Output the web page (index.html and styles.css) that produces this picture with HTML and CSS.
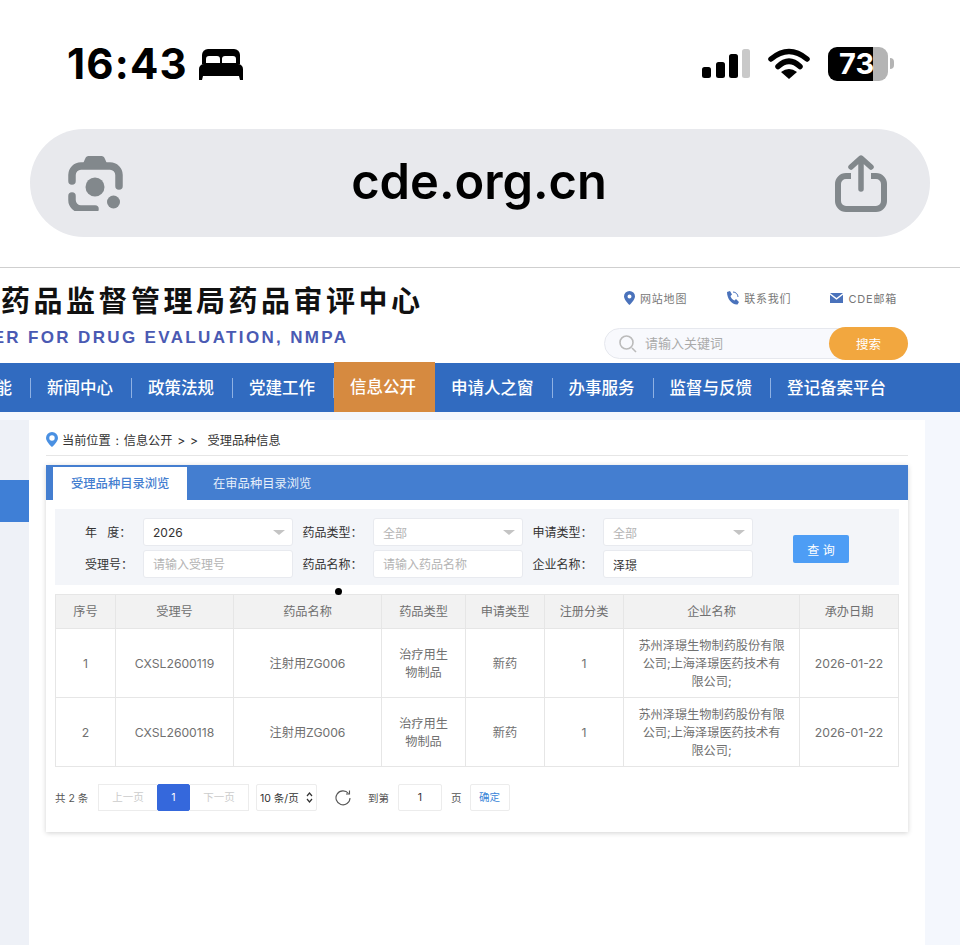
FILE: index.html
```html
<!DOCTYPE html>
<html lang="zh-CN">
<head>
  <meta charset="UTF-8">
  <title>cde.org.cn</title>
  <link rel="stylesheet" href="styles.css">
</head>
<body>
  <div class="status-bar">
    <div class="status-left">
      <span class="time">16:43</span>
      <svg class="bed" width="44" height="31" viewBox="0 0 44 31">
        <path d="M3 15V6a6 6 0 0 1 6-6h26a6 6 0 0 1 6 6v9z" fill="#000"/>
        <path d="M7 14V10a3 3 0 0 1 3-3h8a3 3 0 0 1 3 3v4zM23 14V10a3 3 0 0 1 3-3h8a3 3 0 0 1 3 3v4z" fill="#fff"/>
        <path d="M5 15h34a5 5 0 0 1 5 5v11h-3l-1-4H4l-1 4H0V20a5 5 0 0 1 5-5z" fill="#000"/>
      </svg>
    </div>
    <div class="status-right">
      <svg width="48" height="30" viewBox="0 0 48 30">
        <rect x="0" y="18" width="9" height="11" rx="2.5" fill="#000"/>
        <rect x="14" y="13" width="9" height="16" rx="2.5" fill="#000"/>
        <rect x="27" y="5" width="9" height="24" rx="2.5" fill="#000"/>
        <rect x="40" y="0" width="8" height="29" rx="2.5" fill="#c9c9c9"/>
      </svg>
      <svg class="wifi" width="42" height="31" viewBox="0 0 42 31">
        <path d="M3 11Q21 -4 39 11M10 18.500Q21 8 32 18.500" fill="none" stroke="#000" stroke-width="5.500" stroke-linecap="round"/>
        <path d="M13 24Q21 18 29 24L21 31z" fill="#000"/>
      </svg>
      <div class="battery"><span>73</span></div>
      <div class="battery-nub"></div>
    </div>
  </div>

  <div class="url-bar">
    <svg width="55" height="55" viewBox="0 0 55 55">
      <path d="M4 25v-6a9 9 0 0 1 9-9h29a9 9 0 0 1 9 9v11M4 40v4a9 9 0 0 0 9 9h14" fill="none" stroke="#82888c" stroke-width="7.500" stroke-linecap="round"/>
      <path d="M14 10l3-7a4 4 0 0 1 3-3h14a4 4 0 0 1 3 3l3 7z" fill="#82888c"/>
      <circle cx="27" cy="31" r="9.500" fill="#82888c"/>
      <circle cx="45.500" cy="46" r="6.500" fill="#82888c"/>
    </svg>
    <span class="url">cde.org.cn</span>
    <svg width="52" height="57" viewBox="0 0 52 57">
      <path d="M16 21H11a8 8 0 0 0-8 8v17a8 8 0 0 0 8 8h30a8 8 0 0 0 8-8V29a8 8 0 0 0-8-8h-5" fill="none" stroke="#82888c" stroke-width="6"/>
      <path d="M26 34V4M16 12l10-9 10 9" fill="none" stroke="#82888c" stroke-width="5.500" stroke-linecap="round" stroke-linejoin="round"/>
    </svg>
  </div>

  <div class="page">
    <header class="site-header">
      <div class="logo">
        <h1>国家药品监督管理局药品审评中心</h1>
        <p>CENTER FOR DRUG EVALUATION, NMPA</p>
      </div>
      <div class="header-right">
        <div class="top-links">
          <a>
            <svg width="11" height="14" viewBox="0 0 11 14"><path d="M5.500 0a5.500 5.500 0 0 1 5.500 5.500C11 9 5.500 14 5.500 14S0 9 0 5.500A5.500 5.500 0 0 1 5.500 0zm0 3.500a2 2 0 1 0 0 4 2 2 0 0 0 0-4z" fill="#4a72bb" fill-rule="evenodd"/></svg>
            网站地图
          </a>
          <a>
            <svg width="13" height="14" viewBox="0 0 13 14"><path d="M1 1l3-1 2 3.500-1.500 1.500c.5 2 2 3.500 4 4.500L10 8l3 3-1.500 2.500C6 14 1 8 1 1z" fill="#4a72bb"/><path d="M7 1a5 5 0 0 1 5 5" fill="none" stroke="#4a72bb"/></svg>
            联系我们
          </a>
          <a>
            <svg width="13" height="10" viewBox="0 0 13 10"><path d="M0 0h13L6.500 5zM0 1.800l6.500 5 6.500-5V10H0z" fill="#4a72bb"/></svg>
            CDE邮箱
          </a>
        </div>
        <div class="search">
          <svg width="18" height="18" viewBox="0 0 18 18"><circle cx="7.500" cy="7.500" r="6.500" fill="none" stroke="#bbb" stroke-width="1.600"/><path d="M13 13l4 4" stroke="#bbb" stroke-width="1.600"/></svg>
          <span>请输入关键词</span>
          <button>搜索</button>
        </div>
      </div>
    </header>

    <nav class="nav">
      <a>主要职能</a>
      <a>新闻中心</a>
      <a>政策法规</a>
      <a>党建工作</a>
      <a class="active">信息公开</a>
      <a>申请人之窗</a>
      <a>办事服务</a>
      <a>监督与反馈</a>
      <a class="last">登记备案平台</a>
    </nav>

    <div class="content">
      <aside class="sidebar"><div class="side-active"></div></aside>
      <main class="panel">
        <div class="crumb">
          <svg width="12" height="15" viewBox="0 0 12 15"><path d="M6 0a6 6 0 0 1 6 6c0 4-6 9-6 9S0 10 0 6a6 6 0 0 1 6-6zm0 3.300a2.700 2.700 0 1 0 0 5.400 2.700 2.700 0 0 0 0-5.400z" fill="#4a90e2" fill-rule="evenodd"/></svg>
          <span>当前位置 : 信息公开 &gt; &gt;&nbsp; 受理品种信息</span>
        </div>

        <section class="card">
          <div class="tabs">
            <a class="tab tab-active">受理品种目录浏览</a>
            <a class="tab">在审品种目录浏览</a>
          </div>

          <div class="filter">
            <label>年&nbsp;&nbsp;&nbsp;度：</label>
            <div class="select dark">2026<i></i></div>
            <label class="wide">药品类型：</label>
            <div class="select">全部<i></i></div>
            <label class="wide">申请类型：</label>
            <div class="select">全部<i></i></div>
            <button class="query">查 询</button>
            <label>受理号：</label>
            <input placeholder="请输入受理号">
            <label class="wide">药品名称：</label>
            <input placeholder="请输入药品名称">
            <label class="wide">企业名称：</label>
            <input value="泽璟">
          </div>

          <table class="results">
            <colgroup>
              <col class="c1"><col class="c2"><col class="c3"><col class="c4">
              <col class="c5"><col class="c6"><col class="c7"><col class="c8">
            </colgroup>
            <thead>
              <tr><th>序号</th><th>受理号</th><th>药品名称</th><th>药品类型</th><th>申请类型</th><th>注册分类</th><th>企业名称</th><th>承办日期</th></tr>
            </thead>
            <tbody>
              <tr><td>1</td><td>CXSL2600119</td><td>注射用ZG006</td><td>治疗用生物制品</td><td>新药</td><td>1</td><td>苏州泽璟生物制药股份有限公司;上海泽璟医药技术有限公司;</td><td>2026-01-22</td></tr>
              <tr><td>2</td><td>CXSL2600118</td><td>注射用ZG006</td><td>治疗用生物制品</td><td>新药</td><td>1</td><td>苏州泽璟生物制药股份有限公司;上海泽璟医药技术有限公司;</td><td>2026-01-22</td></tr>
            </tbody>
          </table>

          <div class="pager">
            <span class="total">共 2 条</span>
            <div class="pages">
              <a class="prev">上一页</a>
              <a class="current">1</a>
              <a class="next">下一页</a>
            </div>
            <div class="size">10 条/页
              <svg width="7" height="11" viewBox="0 0 7 11"><path d="M1 4l2.500-3L6 4M1 7l2.500 3L6 7" fill="none" stroke="#333" stroke-width="1.200"/></svg>
            </div>
            <svg class="refresh" width="16" height="16" viewBox="0 0 16 16"><path d="M13.500 3.500A7 7 0 1 0 15 8" fill="none" stroke="#555" stroke-width="1.100"/><path d="M14.500 0.500v3.500H11" fill="none" stroke="#555" stroke-width="1.100"/></svg>
            <span class="goto">到第</span>
            <div class="page-input">1</div>
            <span class="goto-end">页</span>
            <a class="confirm">确定</a>
          </div>
        </section>
        <div class="dot"></div>
      </main>
    </div>
  </div>
</body>
</html>
```

FILE: styles.css
```css
* {
  box-sizing: border-box;
  margin: 0;
}

html, body {
  height: 945px;
  overflow: hidden;
}

body {
  background-color: #fff;
  font-family: Inter, "Noto Sans CJK SC", sans-serif;
  color: #666;
}

/* phone chrome */
.status-bar {
  height: 129px;
  padding: 47px 66px 0 67px;
  display: flex;
  justify-content: space-between;
  align-items: flex-start;
}

.status-left {
  display: flex;
  align-items: center;
  gap: 11px;
}

.bed {
  margin-top: 1px;
}

.time {
  font-weight: 700;
  font-size: 42px;
  letter-spacing: 1.200px;
  line-height: 34px;
  color: #000;
}

.status-right {
  display: flex;
  align-items: flex-start;
  padding-top: 2px;
}

.wifi {
  margin-left: 18px;
  margin-top: -1px;
}

.battery {
  width: 60px;
  height: 34px;
  margin-left: 18px;
  margin-top: -2px;
  border-radius: 9px;
  background: linear-gradient(to right, #000 75%, #b4b4b4 75%);
  color: #fff;
  font-weight: 700;
  font-size: 29px;
  line-height: 34px;
  padding-left: 11px;
}

.battery-nub {
  width: 4px;
  height: 11px;
  margin: 9px 0 0 2px;
  border-radius: 0 4px 4px 0;
  background: #b4b4b4;
}

.url-bar {
  height: 108px;
  margin: 0 30px;
  padding: 0 43px 0 38px;
  background-color: #e8e9ed;
  border-radius: 54px;
  display: flex;
  align-items: center;
  justify-content: space-between;
}

.url {
  font-weight: 600;
  font-size: 48.800px;
  color: #000;
  margin-top: -3px;
}

/* site */
.page {
  margin-top: 30px;
  border-top: 1px solid #cfcfcf;
}

.site-header {
  height: 95px;
  display: flex;
  justify-content: space-between;
  padding-right: 52px;
  overflow: hidden;
}

.logo {
  margin-left: -64px;
  white-space: nowrap;
}

.logo h1 {
  font-size: 29px;
  line-height: 36px;
  letter-spacing: 3.500px;
  color: #111;
  margin-top: 16px;
}

.logo p {
  font-family: "Liberation Sans", sans-serif;
  font-weight: 700;
  font-size: 17px;
  line-height: 20px;
  letter-spacing: 2.350px;
  color: #4a5ab3;
  margin: 8px 0 0 1px;
}

.header-right {
  flex: none;
  width: 304px;
  padding-top: 22px;
}

.top-links {
  display: flex;
  justify-content: flex-end;
  gap: 39px;
  padding-right: 11px;
  height: 38px;
}

.top-links a {
  display: flex;
  align-items: center;
  gap: 5px;
  height: 16px;
  font-size: 11px;
  letter-spacing: 0.800px;
  color: #777;
}

.search {
  height: 31px;
  display: flex;
  align-items: center;
  gap: 8px;
  padding-left: 14px;
  background-color: #f8f9fd;
  border: 1px solid #e6e8ee;
  border-radius: 16px;
  font-size: 13px;
  color: #aaa;
}

.search span {
  margin-top: -3px;
}

.search button {
  margin-left: auto;
  margin-right: -1px;
  width: 79px;
  height: 33px;
  border: none;
  border-radius: 17px;
  background-color: #f2a73f;
  color: #fff;
  font: inherit;
  font-size: 12.500px;
}

.nav {
  height: 49px;
  background-color: #316bc0;
  display: flex;
  align-items: center;
  margin-left: -70px;
}

.nav a {
  height: 20px;
  padding: 0 18px 0 16px;
  line-height: 20px;
  border-right: 1px solid #8fb1e3;
  color: #fff;
  font-size: 16.500px;
  font-weight: 500;
  white-space: nowrap;
}

.nav a.active {
  height: 50px;
  line-height: 50px;
  margin-top: -1px;
  background-color: #d68a40;
  border-right-color: transparent;
}

.nav a.last {
  border-right: none;
}

.content {
  height: 533px;
  display: flex;
  background-color: #f4f7fd;
  padding-top: 8px;
}

.sidebar {
  width: 29px;
  padding-top: 60px;
  background-color: #eef1f7;
}

.side-active {
  height: 42px;
  background-color: #3f7fd6;
}

.panel {
  position: relative;
  width: 896px;
  padding: 0 17px;
  background-color: #fff;
}

.crumb {
  height: 36px;
  display: flex;
  align-items: center;
  gap: 4px;
  padding-top: 4px;
  border-bottom: 1px solid #e6e6e6;
  font-size: 12.200px;
  word-spacing: 1.300px;
  color: #333;
}

.card {
  margin-top: 9px;
  padding-bottom: 21px;
  box-shadow: 0 1px 5px rgba(0, 0, 0, 0.18);
}

.tabs {
  height: 35px;
  padding: 2px 0 0 7px;
  display: flex;
  background-color: #447ed0;
}

.tab {
  padding: 0 26px;
  line-height: 33px;
  font-size: 12.300px;
  white-space: nowrap;
  color: #e6effa;
}

.tab-active {
  width: 134px;
  padding: 0 18px;
  background-color: #fff;
  color: #447ed0;
  font-weight: 500;
}

.filter {
  margin: 9px 9px 0;
  padding: 9px 0 7px 30px;
  height: 76px;
  background-color: #f3f5f9;
  display: grid;
  grid-template-columns: 58px 150px 80px 150px 80px 150px 1fr;
  grid-template-rows: 28px 28px;
  row-gap: 4px;
  font-size: 12px;
}

.filter label {
  line-height: 29px;
  color: #333;
}

.filter label.wide {
  padding-left: 9.500px;
}

.select, .filter input {
  width: 150px;
  height: 28px;
  padding: 0 9px;
  background-color: #fff;
  border: 1px solid #e8eaef;
  border-radius: 3px;
  font-family: inherit;
  font-size: 12px;
  color: #333;
  outline: none;
}

.filter input::placeholder {
  color: #b4b4b4;
}

.select {
  display: flex;
  justify-content: space-between;
  align-items: center;
  color: #b4b4b4;
}

.select.dark {
  color: #333;
}

.select i {
  width: 0;
  height: 0;
  margin-right: -2px;
  border-left: 6px solid transparent;
  border-right: 6px solid transparent;
  border-top: 5px solid #c4c4c4;
}

.query {
  grid-column: 7;
  grid-row: 1 / 3;
  align-self: end;
  justify-self: start;
  margin: 0 0 15px 40px;
  width: 56px;
  height: 28px;
  border: none;
  border-radius: 2px;
  background-color: #4d9df5;
  color: #fff;
  font-family: inherit;
  font-size: 12px;
}

.results {
  width: 843px;
  margin: 9px 9px 0;
  table-layout: fixed;
  border-collapse: collapse;
  font-size: 12.200px;
  line-height: 18px;
  text-align: center;
  color: #707070;
}

.c1 { width: 60px; }
.c2 { width: 118px; }
.c3 { width: 148px; }
.c4 { width: 84px; }
.c5 { width: 79px; }
.c6 { width: 79px; }
.c7 { width: 176px; }
.c8 { width: 99px; }

.results th, .results td {
  border: 1px solid #e6e6e6;
  font-weight: 400;
}

.results th {
  height: 34px;
  background-color: #f2f2f2;
}

.results td {
  height: 69px;
  padding: 1px 14px 0;
}

.pager {
  height: 27px;
  margin: 17px 9px 0;
  display: flex;
  align-items: center;
  font-size: 10.500px;
  color: #555;
}

.total {
  width: 43px;
}

.pages {
  display: flex;
  height: 27px;
  line-height: 25px;
  text-align: center;
  color: #ccc;
}

.pages a {
  border: 1px solid #ececec;
}

.prev, .next {
  width: 59px;
}

.prev {
  border-right: none !important;
}

.next {
  border-left: none !important;
}

.pages a.current {
  width: 33px;
  background-color: #3568dc;
  border-color: #3568dc;
  border-radius: 2px;
  color: #fff;
}

.size {
  width: 61px;
  height: 27px;
  margin-left: 7px;
  padding: 0 3px;
  display: flex;
  align-items: center;
  justify-content: space-between;
  border: 1px solid #ececec;
  border-radius: 2px;
  color: #333;
}

.refresh {
  margin-left: 18px;
}

.goto {
  margin-left: 17px;
}

.page-input {
  width: 44px;
  height: 27px;
  margin-left: 9px;
  line-height: 25px;
  text-align: center;
  border: 1px solid #ececec;
  border-radius: 2px;
  color: #333;
}

.goto-end {
  margin-left: 9px;
}

.confirm {
  width: 40px;
  height: 27px;
  margin-left: 8px;
  line-height: 25px;
  text-align: center;
  border: 1px solid #ececec;
  border-radius: 2px;
  color: #3a86d8;
}

/* stray mark on the capture */
.dot {
  position: absolute;
  left: 306px;
  top: 168px;
  width: 7px;
  height: 7px;
  border-radius: 50%;
  background-color: #000;
}
```
